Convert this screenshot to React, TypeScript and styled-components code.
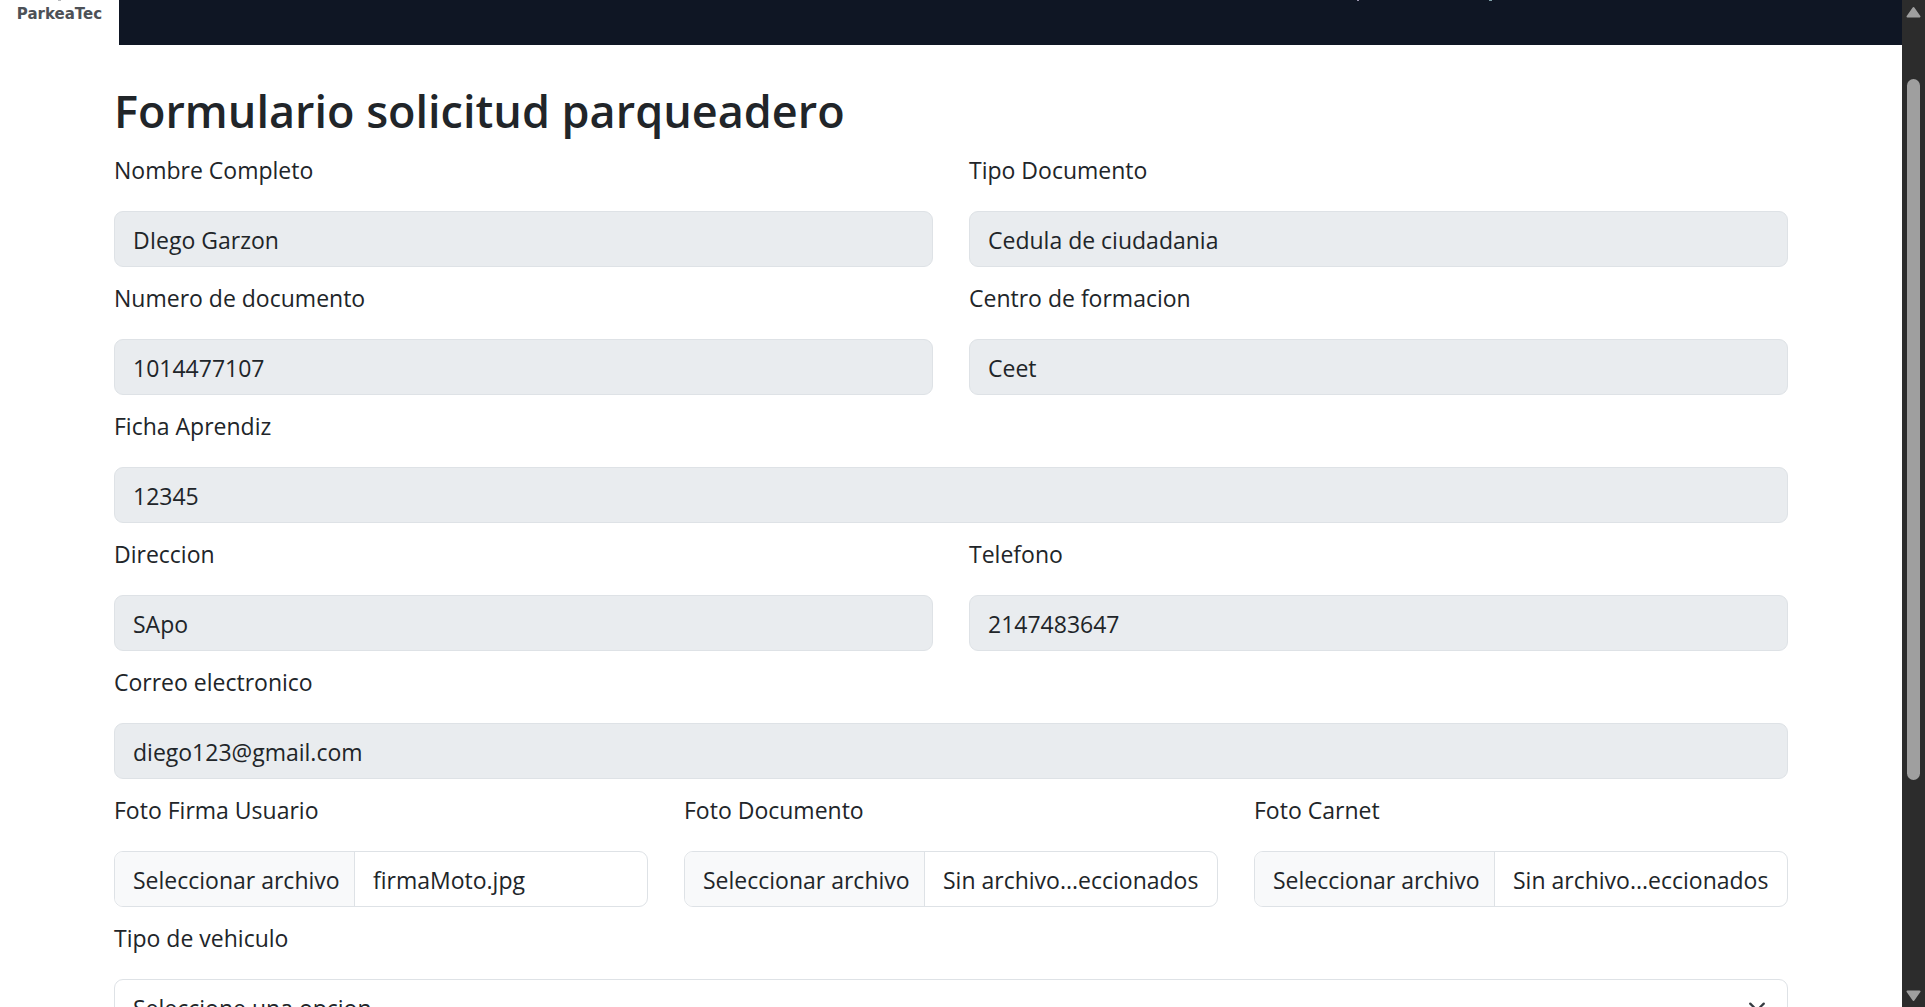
import React, { useState } from "react";
import styled, { createGlobalStyle } from "styled-components";

const GlobalStyle = createGlobalStyle`
  *, *::before, *::after { box-sizing: border-box; }
  body {
    margin: 0;
    background: #ffffff;
    color: #212529;
    font-family: "Segoe UI", "Open Sans", "Noto Sans", sans-serif;
    font-size: 23px;
    line-height: 36px;
  }
`;

const Shell = styled.div`
  display: flex;
  height: 100vh;
  overflow: hidden;
`;

const Page = styled.div`
  flex: 1;
  min-width: 0;
  overflow: hidden;
`;

const Header = styled.header`
  display: flex;
  align-items: flex-start;
  justify-content: space-between;
  height: 45px;
  background: #0f1624;
`;

const Brand = styled.a`
  display: flex;
  flex-direction: column;
  align-items: center;
  width: 119px;
  height: 45px;
  background: #ffffff;
  color: #4d5157;
  font-family: "DejaVu Sans", sans-serif;
  font-size: 15px;
  font-weight: 700;
  line-height: 20px;
  text-decoration: none;
`;

const BrandMark = styled.svg`
  display: block;
  width: 4px;
  height: 4px;
`;

const NavMarks = styled.svg`
  display: block;
  width: 136px;
  height: 2px;
  margin-right: 409px;
`;

const Main = styled.main`
  padding: 37px 114px;
`;

const Title = styled.h1`
  margin: 0 0 12px;
  font-size: 45px;
  font-weight: 600;
  line-height: 58px;
`;

const Form = styled.form`
  display: flex;
  flex-direction: column;
  gap: 13px;
`;

const Row = styled.div<{ $columns: number }>`
  display: grid;
  grid-template-columns: repeat(${(p) => p.$columns}, minmax(0, 1fr));
  gap: 36px;
`;

const Field = styled.div`
  display: flex;
  flex-direction: column;
  gap: 23px;
`;

const Label = styled.label`
  display: block;
`;

const TextInput = styled.input`
  width: 100%;
  height: 56px;
  padding: 2px 18px 0;
  border: 1px solid #dee2e6;
  border-radius: 9px;
  background: #e9ecef;
  color: inherit;
  font: inherit;
  outline: none;
`;

const FileBox = styled.div`
  position: relative;
  display: flex;
  height: 56px;
  border: 1px solid #dee2e6;
  border-radius: 9px;
  overflow: hidden;
  line-height: 56px;
  white-space: nowrap;
`;

const FileButton = styled.span`
  flex: none;
  width: 240px;
  padding: 0 18px;
  border-right: 1px solid #dee2e6;
  background: #f8f9fa;
`;

const FileName = styled.span`
  flex: 1;
  min-width: 0;
  padding: 0 18px;
  overflow: hidden;
`;

const FileInput = styled.input`
  position: absolute;
  inset: 0;
  width: 100%;
  opacity: 0;
  cursor: pointer;
`;

const SelectBox = styled.div`
  position: relative;
`;

const Select = styled.select`
  width: 100%;
  height: 56px;
  padding: 2px 54px 0 18px;
  border: 1px solid #dee2e6;
  border-radius: 9px;
  background: #ffffff;
  color: inherit;
  font: inherit;
  appearance: none;
`;

const Chevron = styled.svg`
  position: absolute;
  top: 19px;
  right: 22px;
  width: 18px;
  height: 18px;
  pointer-events: none;
`;

const ScrollRail = styled.div`
  display: flex;
  flex-direction: column;
  align-items: center;
  flex: none;
  width: 23px;
  padding: 6px 0;
  background: #2c2c2c;
`;

const ScrollArrow = styled.svg`
  display: block;
  flex: none;
  width: 15px;
  height: 12px;
`;

const ScrollTrack = styled.div`
  display: flex;
  flex-direction: column;
  flex: 1;
  padding-top: 61px;
`;

const ScrollThumb = styled.div`
  width: 13px;
  height: 77%;
  border-radius: 7px;
  background: #9f9f9f;
`;

type Item = { id: string; label: string; value: string };

const rows: Item[][] = [
  [
    { id: "nombre", label: "Nombre Completo", value: "DIego Garzon" },
    { id: "tipoDocumento", label: "Tipo Documento", value: "Cedula de ciudadania" },
  ],
  [
    { id: "numero", label: "Numero de documento", value: "1014477107" },
    { id: "centro", label: "Centro de formacion", value: "Ceet" },
  ],
  [{ id: "ficha", label: "Ficha Aprendiz", value: "12345" }],
  [
    { id: "direccion", label: "Direccion", value: "SApo" },
    { id: "telefono", label: "Telefono", value: "2147483647" },
  ],
  [{ id: "correo", label: "Correo electronico", value: "diego123@gmail.com" }],
];

const files: Item[] = [
  { id: "firma", label: "Foto Firma Usuario", value: "firmaMoto.jpg" },
  { id: "documento", label: "Foto Documento", value: "Sin archivo...eccionados" },
  { id: "carnet", label: "Foto Carnet", value: "Sin archivo...eccionados" },
];

function FileField({ id, label, value }: Item) {
  const [name, setName] = useState(value);
  return (
    <Field>
      <Label htmlFor={id}>{label}</Label>
      <FileBox>
        <FileButton>Seleccionar archivo</FileButton>
        <FileName>{name}</FileName>
        <FileInput
          id={id}
          type="file"
          onChange={(e) => setName(e.target.files?.[0]?.name ?? value)}
        />
      </FileBox>
    </Field>
  );
}

export default function App() {
  return (
    <Shell>
      <GlobalStyle />
      <Page>
        <Header>
          <Brand href="#">
            <BrandMark viewBox="0 0 4 4" aria-hidden="true">
              <rect x="0" y="0" width="3" height="1" fill="#b9bbbe" />
            </BrandMark>
            ParkeaTec
          </Brand>
          <NavMarks viewBox="0 0 136 2" aria-hidden="true">
            <rect x="0" y="0" width="2" height="1" fill="#9a93ae" />
            <rect x="132" y="0" width="3" height="1" fill="#7f9fa8" />
          </NavMarks>
        </Header>
        <Main>
          <Title>Formulario solicitud parqueadero</Title>
          <Form>
            {rows.map((row) => (
              <Row key={row[0].id} $columns={row.length}>
                {row.map((item) => (
                  <Field key={item.id}>
                    <Label htmlFor={item.id}>{item.label}</Label>
                    <TextInput id={item.id} type="text" readOnly value={item.value} />
                  </Field>
                ))}
              </Row>
            ))}
            <Row $columns={3}>
              {files.map((item) => (
                <FileField key={item.id} {...item} />
              ))}
            </Row>
            <Field>
              <Label htmlFor="vehiculo">Tipo de vehiculo</Label>
              <SelectBox>
                <Select id="vehiculo" defaultValue="">
                  <option value="">Seleccione una opcion</option>
                </Select>
                <Chevron viewBox="0 0 16 16" aria-hidden="true">
                  <path
                    d="m2 5 6 6 6-6"
                    fill="none"
                    stroke="#343a40"
                    strokeWidth="2"
                    strokeLinecap="round"
                    strokeLinejoin="round"
                  />
                </Chevron>
              </SelectBox>
            </Field>
          </Form>
        </Main>
      </Page>
      <ScrollRail aria-hidden="true">
        <ScrollArrow viewBox="0 0 15 12">
          <path d="M7.5 2 13.5 10.5H1.5Z" fill="#9f9f9f" stroke="#9f9f9f" strokeWidth="2" strokeLinejoin="round" />
        </ScrollArrow>
        <ScrollTrack>
          <ScrollThumb />
        </ScrollTrack>
        <ScrollArrow viewBox="0 0 15 12">
          <path d="M7.5 11 13.5 2.5H1.5Z" fill="#9f9f9f" stroke="#9f9f9f" strokeWidth="2" strokeLinejoin="round" />
        </ScrollArrow>
      </ScrollRail>
    </Shell>
  );
}
